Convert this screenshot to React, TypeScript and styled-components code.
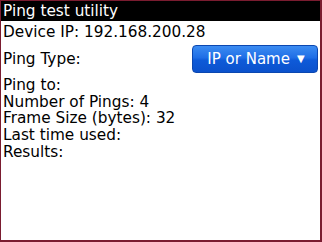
import React from "react";
import styled, { createGlobalStyle } from "styled-components";

const Global = createGlobalStyle`
  html, body { margin: 0; padding: 0; background: #fff; }
  body { font-family: "DejaVu Sans", sans-serif; }
`;

const Screen = styled.div`
  width: 322px;
  height: 242px;
  box-sizing: border-box;
  border-style: solid;
  border-color: #7a1c30;
  border-width: 1px 2px 2px 1px;
  background: #fff;
  display: flex;
  flex-direction: column;
  font-family: "DejaVu Sans", sans-serif;
  font-size: 15.3px;
  color: #000;
  overflow: hidden;
`;

const TitleBar = styled.div`
  height: 20px;
  background: #000;
  color: #fff;
  padding-left: 2px;
  line-height: 20px;
  white-space: nowrap;
`;

const Line = styled.div<{ $h?: number }>`
  height: ${(p) => p.$h ?? 16.7}px;
  line-height: ${(p) => p.$h ?? 16.7}px;
  padding-left: 2px;
  white-space: nowrap;
`;

const DeviceLine = styled(Line)`
  padding-top: 1px;
`;

const TypeRow = styled.div`
  display: flex;
  align-items: center;
  justify-content: space-between;
  padding: 3px 2px 4px 2px;
`;

const DropButton = styled.button`
  width: 126px;
  height: 28px;
  box-sizing: border-box;
  border: 1px solid #0b47b0;
  border-radius: 4px;
  background: linear-gradient(#3c8cf2 0%, #1f6ee6 45%, #0e5ad8 55%, #0b51cc 100%);
  color: #fff;
  font-family: "DejaVu Sans", sans-serif;
  font-size: 15px;
  padding: 0 0 0 2px;
  display: flex;
  align-items: center;
  justify-content: center;
  gap: 7px;
`;

const Arrow = styled.span`
  font-size: 10px;
  line-height: 1;
`;

export default function App() {
  return (
    <>
      <Global />
      <Screen>
        <TitleBar>Ping test utility</TitleBar>
        <DeviceLine $h={20}>Device IP: 192.168.200.28</DeviceLine>
        <TypeRow>
          <span>Ping Type:</span>
          <DropButton>
            IP or Name<Arrow>▼</Arrow>
          </DropButton>
        </TypeRow>
        <Line>Ping to:</Line>
        <Line>Number of Pings: 4</Line>
        <Line>Frame Size (bytes): 32</Line>
        <Line>Last time used:</Line>
        <Line>Results:</Line>
      </Screen>
    </>
  );
}
